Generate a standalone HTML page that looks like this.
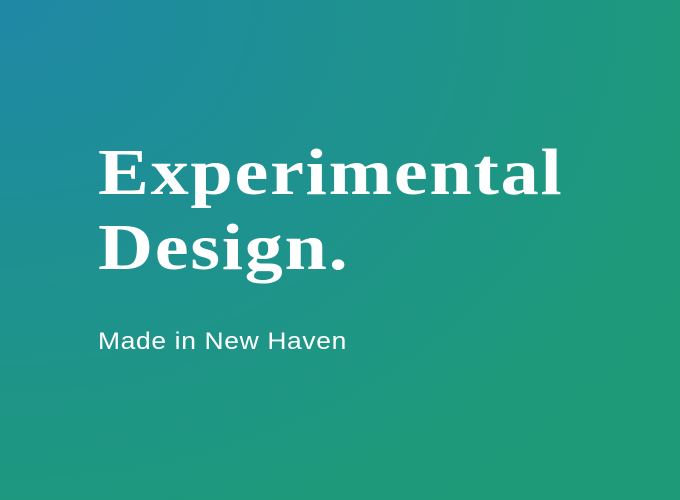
<!DOCTYPE html>
<html><head><style>
html,body{margin:0;padding:0}
body{width:680px;height:500px;overflow:hidden;position:relative;
background:radial-gradient(ellipse 900px 700px at 0% 0%, #1f88a6 0%, #1e9190 40%, #1e9a7a 80%, #1e9a78 100%);}
h1{position:absolute;left:98px;top:0;margin:0;font-family:"Liberation Serif",serif;font-weight:bold;color:#fff;font-size:66px;line-height:75px;letter-spacing:1.5px;transform:scaleX(1.155);transform-origin:0 0;}
.l1{position:absolute;left:0;top:135px;white-space:nowrap}
.l2{position:absolute;left:0;top:210px;white-space:nowrap}
p{position:absolute;left:98px;top:327px;margin:0;font-family:"Liberation Sans",sans-serif;color:#fff;font-size:24px;line-height:30px;letter-spacing:0.6px;white-space:nowrap;transform:scaleX(1.1);transform-origin:0 0}
</style></head><body>
<h1><span class="l1">Experimental</span><span class="l2">Design.</span></h1>
<p>Made in New Haven</p>
</body></html>
